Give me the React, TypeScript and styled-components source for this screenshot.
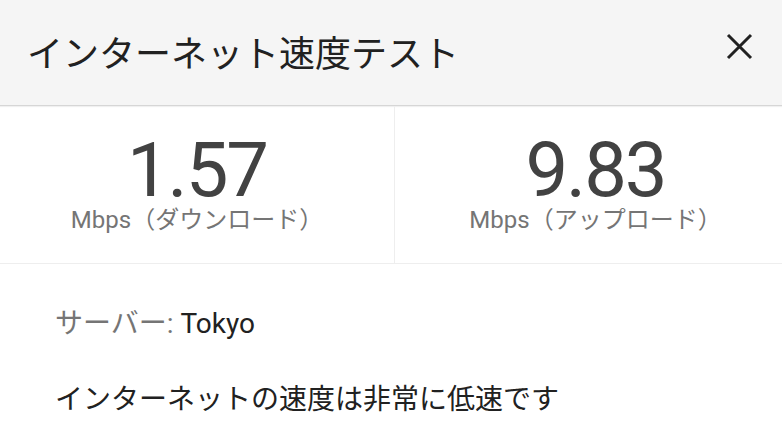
import React from "react";
import styled, { createGlobalStyle } from "styled-components";

const GlobalStyle = createGlobalStyle`
  html, body {
    margin: 0;
    padding: 0;
    background: #ffffff;
    font-family: Roboto, "Noto Sans CJK JP", sans-serif;
    overflow: hidden;
  }
`;

const Page = styled.div`
  width: 782px;
  height: 432px;
  overflow: hidden;
  display: flex;
  flex-direction: column;
`;

const Header = styled.header`
  height: 106px;
  box-sizing: border-box;
  display: flex;
  align-items: center;
  justify-content: space-between;
  padding: 0 29px 0 27px;
  background: #f5f5f5;
  border-bottom: 1px solid #d6d6d6;
  box-shadow: 0 1px 1px rgba(0, 0, 0, 0.06);
`;

const Title = styled.h1`
  margin: 0;
  margin-top: 4px;
  font-size: 36px;
  font-weight: 400;
  color: #212121;
  line-height: 42px;
`;

const CloseButton = styled.button`
  width: 27px;
  height: 27px;
  padding: 0;
  border: none;
  background: transparent;
  cursor: pointer;
  display: flex;
  margin-top: -12px;
`;

const Stats = styled.section`
  display: grid;
  grid-template-columns: 395px 1fr;
  height: 158px;
  box-sizing: border-box;
  border-bottom: 1px solid #eeeeee;
`;

const StatCell = styled.div<{ $divider?: boolean; $shift?: number }>`
  display: flex;
  flex-direction: column;
  align-items: center;
  padding-top: 29px;
  padding-left: ${(p) => p.$shift ?? 0}px;
  border-right: ${(p) => (p.$divider ? "1px solid #eeeeee" : "none")};
`;

const Value = styled.div`
  font-size: 76px;
  line-height: 70px;
  letter-spacing: -2px;
  color: #424242;
`;

const Unit = styled.div`
  margin-top: 3px;
  font-size: 24px;
  line-height: 24px;
  color: #757575;
`;

const Details = styled.section`
  padding: 39px 0 0 55px;
  display: flex;
  flex-direction: column;
  gap: 34px;
`;

const Line = styled.p`
  margin: 0;
  font-size: 28px;
  line-height: 42px;
  color: #212121;
`;

const Label = styled.span`
  color: #757575;
`;

const stats = [
  { value: "1.57", unit: "Mbps（ダウンロード）" },
  { value: "9.83", unit: "Mbps（アップロード）" },
];

export default function App() {
  return (
    <>
      <GlobalStyle />
      <Page>
        <Header>
          <Title>インターネット速度テスト</Title>
          <CloseButton aria-label="閉じる">
            <svg width="27" height="27" viewBox="0 0 27 27">
              <path
                d="M2 2 L25 25 M25 2 L2 25"
                stroke="#212121"
                strokeWidth="3"
                fill="none"
              />
            </svg>
          </CloseButton>
        </Header>
        <Stats>
          {stats.map((s, i) => (
            <StatCell key={s.value} $divider={i === 0} $shift={i === 1 ? 14 : 0}>
              <Value>{s.value}</Value>
              <Unit>{s.unit}</Unit>
            </StatCell>
          ))}
        </Stats>
        <Details>
          <Line>
            <Label>サーバー:</Label> Tokyo
          </Line>
          <Line>インターネットの速度は非常に低速です</Line>
        </Details>
      </Page>
    </>
  );
}
